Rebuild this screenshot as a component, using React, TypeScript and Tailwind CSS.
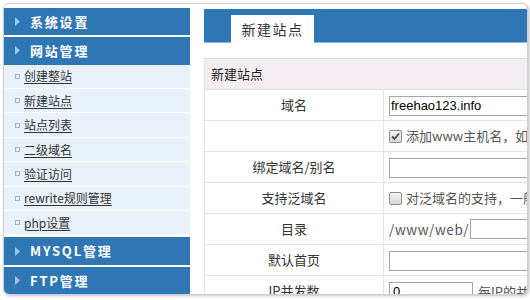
import React from "react";

const cjk = "font-['Noto_Sans_CJK_SC','Noto_Sans',sans-serif]";

function Header({ label }: { label: string }) {
  return (
    <div className="h-[28px] bg-[#2f76b4] flex items-center pl-[11px]">
      <svg width="5" height="9" viewBox="0 0 5 9" className="shrink-0">
        <polygon points="0,0 5,4.5 0,9" fill="#9dc3ea" />
      </svg>
      <span className={`ml-[10px] text-white font-bold text-[13px] tracking-[1.8px] ${cjk}`}>{label}</span>
    </div>
  );
}

function Item({ label }: { label: string }) {
  return (
    <div className="h-[25px] bg-[#e9f2fb] border-b border-white flex items-center pl-[11px]">
      <span className="w-[5px] h-[5px] border border-[#9db6d3] shrink-0" />
      <span className={`ml-[4px] text-[12px] text-[#333] underline underline-offset-2 ${cjk}`}>{label}</span>
    </div>
  );
}

function Check({ checked }: { checked?: boolean }) {
  return (
    <span className="w-[13px] h-[13px] border border-[#8e8e8e] rounded-[2px] bg-gradient-to-b from-[#f2f2f2] to-[#d8d8d8] flex items-center justify-center shrink-0">
      {checked && (
        <svg width="9" height="9" viewBox="0 0 9 9">
          <path d="M1 4.5 L3.5 7 L8 1.5" stroke="#4a4a4a" strokeWidth="1.8" fill="none" />
        </svg>
      )}
    </span>
  );
}

function Row({ label, children, center }: { label: string; children: React.ReactNode; center?: boolean }) {
  return (
    <div className="h-[31px] flex border-b border-[#e2e2ea]">
      <div className={`w-[179px] shrink-0 border-r border-[#e2e2ea] flex items-center justify-center text-[13px] text-[#333] ${cjk}`}>
        {label}
      </div>
      <div className={`flex-1 min-w-0 pl-[5px] flex ${center ? "items-center" : "items-start pt-[6px]"} overflow-hidden`}>
        {children}
      </div>
    </div>
  );
}

const inputCls = "h-[20px] border border-[#a6a6a6] bg-white shrink-0 px-[1px] flex items-center text-[13px] text-black font-['Liberation_Sans',Arial,sans-serif]";

export default function App() {
  return (
    <div className="w-[530px] h-[300px] bg-white p-[3px]">
      <div className="w-[525px] h-[292px] border border-[#cdd0d8] rounded-[6px] overflow-hidden shadow-[1px_1px_3px_rgba(0,0,0,0.25)] flex bg-white">
        <aside className="w-[186px] shrink-0 pt-[4px] flex flex-col">
          <Header label="系统设置" />
          <div className="h-[2px]" />
          <Header label="网站管理" />
          <Item label="创建整站" />
          <Item label="新建站点" />
          <Item label="站点列表" />
          <Item label="二级域名" />
          <Item label="验证访问" />
          <Item label="rewrite规则管理" />
          <Item label="php设置" />
          <div className="h-[2px]" />
          <Header label="MYSQL管理" />
          <div className="h-[2px]" />
          <Header label="FTP管理" />
        </aside>
        <main className="ml-[14px] flex-1 min-w-0 pt-[5px] overflow-hidden">
          <div className="h-[34px] bg-[#2f76b4] border-b border-[#86b6e2] flex items-end pl-[27px]">
            <div className={`w-[83px] h-[28px] -mb-[1px] bg-white flex items-center justify-center text-[14px] tracking-[1.5px] text-[#333] ${cjk}`}>
              新建站点
            </div>
          </div>
          <div className="mt-[15px] border-l border-[#e2e2ea]">
            <div className={`h-[32px] bg-[#f4eef3] border-t border-b border-[#dedee6] flex items-center pl-[6px] text-[13px] text-[#222] ${cjk}`}>
              新建站点
            </div>
            <Row label="域名">
              <div className={`${inputCls} w-[200px]`}>freehao123.info</div>
            </Row>
            <Row label="" center>
              <Check checked />
              <span className={`ml-[4px] text-[13px] text-[#555] whitespace-nowrap ${cjk}`}>添加www主机名，如：www.freehao123.info</span>
            </Row>
            <Row label="绑定域名/别名">
              <div className={`${inputCls} w-[200px]`} />
            </Row>
            <Row label="支持泛域名" center>
              <Check />
              <span className={`ml-[4px] text-[13px] text-[#555] whitespace-nowrap ${cjk}`}>对泛域名的支持，一般不需要</span>
            </Row>
            <Row label="目录" center>
              <span className={`text-[13.5px] text-[#555] tracking-[0.6px] whitespace-nowrap ${cjk}`}>/www/web/</span>
              <div className={`${inputCls} w-[150px] ml-[1px]`} />
            </Row>
            <Row label="默认首页">
              <div className={`${inputCls} w-[200px]`} />
            </Row>
            <Row label="IP并发数">
              <div className={`${inputCls} w-[84px] pl-[3px]`}>0</div>
              <span className={`ml-[5px] text-[13px] text-[#555] whitespace-nowrap ${cjk}`}>每IP的并发连接数</span>
            </Row>
          </div>
        </main>
      </div>
    </div>
  );
}
